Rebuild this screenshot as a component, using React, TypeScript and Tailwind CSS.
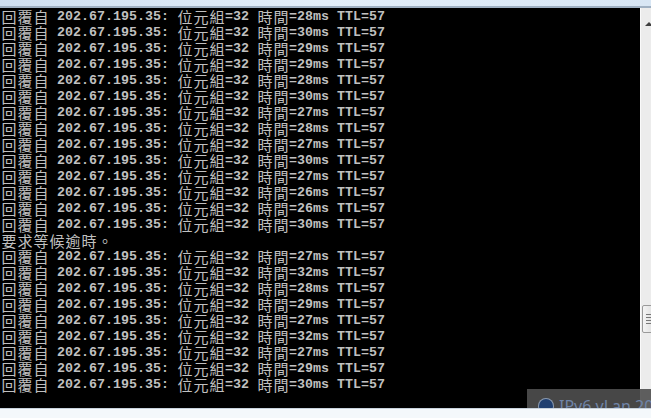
import React from "react";

const times = ["28","30","29","29","28","30","27","28","27","30","27","26","26","30",null,"27","32","28","29","27","32","27","29","30"];

function isWide(c: string) {
  return c.charCodeAt(0) > 0x2e80;
}

function Line({ text }: { text: string }) {
  return (
    <div className="flex h-[16px] items-center whitespace-pre">
      {Array.from(text).map((c, i) =>
        isWide(c) ? (
          <span
            key={i}
            className="inline-block w-[16px] text-center text-[15px] leading-[16px]"
            style={{ fontFamily: '"Noto Sans CJK TC", "Noto Sans CJK SC", sans-serif' }}
          >
            {c}
          </span>
        ) : (
          <span
            key={i}
            className="inline-block w-[8px] text-center text-[13.3px] font-bold leading-[16px]"
            style={{ fontFamily: '"Liberation Mono", monospace' }}
          >
            {c}
          </span>
        )
      )}
    </div>
  );
}

export default function App() {
  return (
    <div className="relative flex h-[418px] w-[651px] flex-col overflow-hidden bg-[#f4f8fb]">
      <div className="h-[6px] shrink-0 bg-gradient-to-r from-[#cfdff0] via-[#e3eef9] to-[#d8e6f4]" />
      <div className="h-[2px] shrink-0 bg-[#9fb0c2]" />
      <div className="flex h-[400px] shrink-0">
        <div className="flex-1 bg-black pl-[1px] pt-[1px] text-[#c0c0c0]">
          {times.map((t, i) => (
            <Line
              key={i}
              text={t === null ? "要求等候逾時。" : `回覆自 202.67.195.35: 位元組=32 時間=${t}ms TTL=57`}
            />
          ))}
        </div>
        <div className="relative w-[11px] border-l border-[#fafafa] bg-[#ececec]">
          <svg className="absolute left-[4px] top-[13px]" width="8" height="6" viewBox="0 0 8 6">
            <polygon points="0,5 4,1 8,5" fill="#404040" />
          </svg>
          <div className="absolute left-[1px] top-[297px] flex h-[28px] w-[14px] flex-col items-center justify-center gap-[2px] rounded-[2px] border border-[#9a9a9a] bg-gradient-to-r from-[#f4f4f4] to-[#dcdcdc]">
            <div className="h-[1px] w-[6px] bg-[#777]" />
            <div className="h-[1px] w-[6px] bg-[#777]" />
            <div className="h-[1px] w-[6px] bg-[#777]" />
            <div className="h-[1px] w-[6px] bg-[#777]" />
          </div>
        </div>
      </div>
      <div className="h-[1px] shrink-0 bg-[#c8d2dc]" />
      <div className="flex-1 bg-[#f4f8fb]" />
      <div className="absolute left-[527px] top-[389px] flex h-[19px] w-[130px] items-start gap-[6px] overflow-hidden bg-[#4f4f4f]/90 pl-[12px] pt-[10px]">
        <div className="h-[14px] w-[14px] shrink-0 rounded-full bg-[#1f3f70] ring-1 ring-[#8a9ab0]" />
        <span className="whitespace-nowrap text-[16px] leading-[14px] text-[#6f84a8]" style={{ fontFamily: '"Noto Sans", sans-serif' }}>
          IPv6 vLan 20
        </span>
      </div>
    </div>
  );
}
